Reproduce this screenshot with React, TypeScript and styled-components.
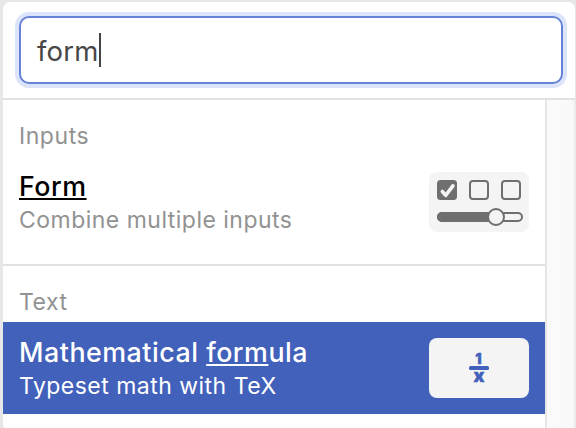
import React from "react";
import styled, { createGlobalStyle, css } from "styled-components";

const GlobalStyle = createGlobalStyle`
  *, *::before, *::after { box-sizing: border-box; }
  body {
    margin: 0;
    overflow: hidden;
    background: #e7e7e7;
    font-family: Inter, "Liberation Sans", sans-serif;
  }
`;

const Panel = styled.main`
  display: flex;
  flex-direction: column;
  width: 572px;
  height: 426px;
  margin: 2px 1px 0 3px;
  overflow: hidden;
  background: #fff;
  border-radius: 7px 7px 0 3px;
`;

const SearchBar = styled.header`
  flex: none;
  height: 98px;
  padding: 14px 12px 0 16px;
  border-bottom: 2px solid #e1e1e1;
`;

const SearchField = styled.div`
  display: flex;
  align-items: center;
  height: 68px;
  padding: 0 16px;
  border: 2px solid #6682d8;
  border-radius: 10px;
  box-shadow: 0 0 0 4px #dce4fc;
`;

const Query = styled.span`
  padding-top: 2px;
  color: #474747;
  font-size: 27.5px;
  line-height: 34px;
  letter-spacing: 0.2px;
`;

const Caret = styled.span`
  width: 2px;
  height: 34px;
  background: #444;
`;

const Body = styled.div`
  display: flex;
  flex: 1;
  min-height: 0;
`;

const Results = styled.div`
  width: 542px;
`;

const Preview = styled.aside`
  flex: 1;
  border-left: 2px solid #e6e6e6;
  background: linear-gradient(90deg, #fafafa 0 16px, #f8f8f8 26px, #f1f1f1 27px);
`;

const Group = styled.section`
  height: 166px;
  border-bottom: 2px solid #e1e1e1;
`;

const GroupTitle = styled.h2`
  height: 56px;
  margin: 0;
  padding: 20px 16px 0;
  color: #929292;
  font-size: 23px;
  font-weight: 400;
  line-height: 32px;
  letter-spacing: 0.55px;
`;

const Item = styled.div<{ $selected?: boolean }>`
  display: flex;
  align-items: center;
  justify-content: space-between;
  height: 92px;
  padding: 0 16px;
  color: #000;
  ${(p) => p.$selected && css`
    background: #4261ba;
    color: #fff;
  `}
`;

const ItemText = styled.div`
  padding-top: 2px;
`;

const ItemTitle = styled.div`
  padding-bottom: 2px;
  font-size: 26.8px;
  font-weight: 500;
  line-height: 32px;
  letter-spacing: 0.52px;
`;

const Match = styled.span`
  text-decoration: underline;
  text-decoration-thickness: 2px;
  text-underline-offset: 2px;
`;

const Description = styled.div<{ $selected?: boolean }>`
  color: ${(p) => (p.$selected ? "#fff" : "#929292")};
  font-size: 23px;
  line-height: 32px;
  letter-spacing: 0.48px;
`;

const Thumb = styled.div`
  flex: none;
  width: 100px;
  height: 60px;
  border-radius: 8px;
  background: #f4f4f4;
  svg { display: block; }
`;

const FormIcon = () => (
  <svg width="100" height="60" viewBox="0 0 100 60" fill="none" stroke="#6f6f6f" strokeWidth="2">
    <rect x="8" y="8" width="20" height="20" rx="3.5" fill="#6f6f6f" stroke="none" />
    <path d="M13.3 19.5l3.4 3.8 7.2-9.5" stroke="#f4f4f4" strokeWidth="3.6" strokeLinecap="round" strokeLinejoin="round" />
    <rect x="41" y="9" width="18" height="18" rx="3" />
    <rect x="73" y="9" width="18" height="18" rx="3" />
    <rect x="9" y="41" width="84" height="8" rx="4" />
    <path d="M13 40h54v10H13a5 5 0 0 1 0-10z" fill="#6f6f6f" stroke="none" />
    <circle cx="67" cy="45" r="8" fill="#f4f4f4" />
  </svg>
);

const FormulaIcon = () => (
  <svg
    width="100"
    height="60"
    viewBox="0 0 100 60"
    fill="#4261ba"
    fontFamily="Inter, sans-serif"
    fontWeight="900"
    textAnchor="middle"
  >
    <text x="49.4" y="26" fontSize="14" stroke="#4261ba" strokeWidth="0.4">1</text>
    <rect x="40" y="28" width="20" height="4" rx="1.5" />
    <text x="50" y="44" fontSize="18" stroke="#4261ba" strokeWidth="0.4">x</text>
  </svg>
);

export default function App() {
  return (
    <>
      <GlobalStyle />
      <Panel>
        <SearchBar>
          <SearchField>
            <Query>form</Query>
            <Caret />
          </SearchField>
        </SearchBar>
        <Body>
          <Results>
            <Group>
              <GroupTitle>Inputs</GroupTitle>
              <Item>
                <ItemText>
                  <ItemTitle><Match>Form</Match></ItemTitle>
                  <Description>Combine multiple inputs</Description>
                </ItemText>
                <Thumb><FormIcon /></Thumb>
              </Item>
            </Group>
            <GroupTitle>Text</GroupTitle>
            <Item $selected>
              <ItemText>
                <ItemTitle>Mathematical <Match>form</Match>ula</ItemTitle>
                <Description $selected>Typeset math with TeX</Description>
              </ItemText>
              <Thumb><FormulaIcon /></Thumb>
            </Item>
          </Results>
          <Preview />
        </Body>
      </Panel>
    </>
  );
}
